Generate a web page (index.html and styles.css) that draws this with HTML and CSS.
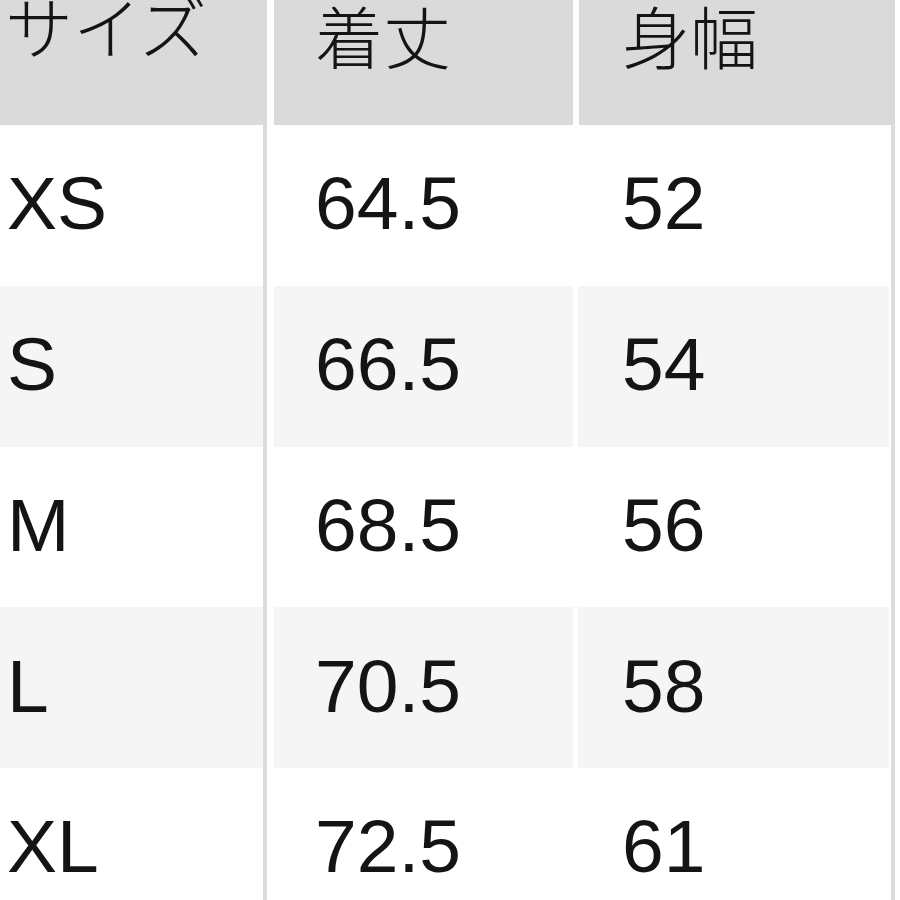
FILE: index.html
```html
<!DOCTYPE html>
<html lang="ja">
<head>
<meta charset="utf-8">
<title>サイズ表</title>
<link rel="stylesheet" href="styles.css">
</head>
<body>
<div class="table">
  <div class="row head">
    <div class="cell c1">サイズ</div>
    <div class="gap g1"></div>
    <div class="cell c2">着丈</div>
    <div class="gap g2"></div>
    <div class="cell c3">身幅</div>
  </div>
  <div class="row body">
    <div class="cell c1">XS</div>
    <div class="line"></div>
    <div class="gap g1b"></div>
    <div class="cell c2">64.5</div>
    <div class="gap g2b"></div>
    <div class="cell c3">52</div>
    <div class="gap g3b"></div>
    <div class="line"></div>
  </div>
  <div class="row body alt">
    <div class="cell c1">S</div>
    <div class="line"></div>
    <div class="gap g1b"></div>
    <div class="cell c2">66.5</div>
    <div class="gap g2b"></div>
    <div class="cell c3">54</div>
    <div class="gap g3b"></div>
    <div class="line"></div>
  </div>
  <div class="row body">
    <div class="cell c1">M</div>
    <div class="line"></div>
    <div class="gap g1b"></div>
    <div class="cell c2">68.5</div>
    <div class="gap g2b"></div>
    <div class="cell c3">56</div>
    <div class="gap g3b"></div>
    <div class="line"></div>
  </div>
  <div class="row body alt">
    <div class="cell c1">L</div>
    <div class="line"></div>
    <div class="gap g1b"></div>
    <div class="cell c2">70.5</div>
    <div class="gap g2b"></div>
    <div class="cell c3">58</div>
    <div class="gap g3b"></div>
    <div class="line"></div>
  </div>
  <div class="row body">
    <div class="cell c1">XL</div>
    <div class="line"></div>
    <div class="gap g1b"></div>
    <div class="cell c2">72.5</div>
    <div class="gap g2b"></div>
    <div class="cell c3">61</div>
    <div class="gap g3b"></div>
    <div class="line"></div>
  </div>
</div>
</body>
</html>
```

FILE: styles.css
```css
html, body {
  margin: 0;
  padding: 0;
  background: #ffffff;
}
body {
  width: 900px;
  height: 900px;
  overflow: hidden;
  color: #141414;
  font-family: "Liberation Sans", "Noto Sans CJK JP", sans-serif;
}
.table {
  display: flex;
  flex-direction: column;
}
.row {
  display: flex;
  flex-shrink: 0;
}
.head {
  height: 125px;
  align-items: flex-start;
  font-family: "Noto Sans CJK JP", sans-serif;
  font-weight: 300;
  font-size: 68px;
  line-height: 68px;
}
.head .cell {
  background: #dadada;
  height: 125px;
  padding-top: 1px;
  box-sizing: border-box;
}
.head .c1 { width: 267px; padding-left: 5px; padding-top: 0; line-height: 50px; }
.head .g1 { width: 7px; }
.head .c2 { width: 299px; padding-left: 41px; }
.head .g2 { width: 6px; }
.head .c3 { width: 316px; padding-left: 43px; }

.body {
  height: 160.75px;
  font-size: 75px;
  line-height: 1;
}
.body .cell {
  display: flex;
  align-items: center;
  box-sizing: border-box;
  padding-bottom: 3px;
}
.alt .cell {
  background: #f5f5f5;
}
.body .c1 { width: 263px; padding-left: 7px; }
.line { width: 4px; background: #dcdcdc; }
.body .g1b { width: 7px; }
.body .c2 { width: 299px; padding-left: 41px; }
.body .g2b { width: 5px; }
.body .c3 { width: 311px; padding-left: 44px; }
.body .g3b { width: 2px; }
```
